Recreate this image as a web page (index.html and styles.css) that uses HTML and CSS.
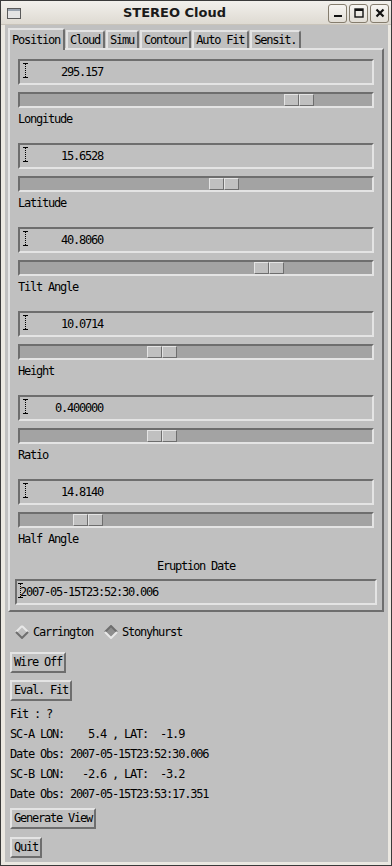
FILE: index.html
```html
<!DOCTYPE html>
<html lang="en">

<head>
  <meta charset="UTF-8">
  <meta name="viewport" content="width=device-width, initial-scale=1.0">
  <title>STEREO Cloud</title>
  <link rel="stylesheet" href="styles.css">
</head>

<body>
  <div class="window">
    <div class="titlebar">
      <svg class="app-icon" width="14" height="11" viewBox="0 0 14 11">
        <rect x="0.5" y="0.5" width="13" height="10" fill="#e4e4e4" stroke="#5a5a5a" />
        <rect x="1" y="1" width="12" height="2" fill="#9aa4b0" />
      </svg>
      <span class="title">STEREO Cloud</span>
      <div class="wm-buttons">
        <span class="wm-btn">
          <svg width="10" height="10" viewBox="0 0 10 10"><rect x="1" y="7" width="8" height="2" fill="#111" /></svg>
        </span>
        <span class="wm-btn">
          <svg width="10" height="10" viewBox="0 0 10 10"><rect x="1" y="1" width="8" height="8" fill="none" stroke="#111" stroke-width="1.4" /><rect x="1" y="1" width="8" height="2" fill="#111" /></svg>
        </span>
        <span class="wm-btn">
          <svg width="10" height="10" viewBox="0 0 10 10"><path d="M1.5 1.5l7 7M8.5 1.5l-7 7" stroke="#111" stroke-width="2.2" /></svg>
        </span>
      </div>
    </div>

    <div class="client">
      <div class="tabs">
        <span class="tab active">Position</span>
        <span class="tab">Cloud</span>
        <span class="tab">Simu</span>
        <span class="tab">Contour</span>
        <span class="tab">Auto Fit</span>
        <span class="tab">Sensit.</span>
      </div>

      <div class="panel">
        <div class="param">
          <div class="field"><svg class="caret" width="5" height="15"><path d="M0 0.5h5M0 14.5h5" stroke="#000" /><path d="M2.5 1v13" stroke="#000" stroke-dasharray="1 1" /></svg><span class="value">      295.157</span></div>
          <div class="slider"><span class="thumb" style="margin-left: 264px"><i></i><i></i></span></div>
          <div class="param-label">Longitude</div>
        </div>
        <div class="param">
          <div class="field"><svg class="caret" width="5" height="15"><path d="M0 0.5h5M0 14.5h5" stroke="#000" /><path d="M2.5 1v13" stroke="#000" stroke-dasharray="1 1" /></svg><span class="value">      15.6528</span></div>
          <div class="slider"><span class="thumb" style="margin-left: 189px"><i></i><i></i></span></div>
          <div class="param-label">Latitude</div>
        </div>
        <div class="param">
          <div class="field"><svg class="caret" width="5" height="15"><path d="M0 0.5h5M0 14.5h5" stroke="#000" /><path d="M2.5 1v13" stroke="#000" stroke-dasharray="1 1" /></svg><span class="value">      40.8060</span></div>
          <div class="slider"><span class="thumb" style="margin-left: 234px"><i></i><i></i></span></div>
          <div class="param-label">Tilt Angle</div>
        </div>
        <div class="param">
          <div class="field"><svg class="caret" width="5" height="15"><path d="M0 0.5h5M0 14.5h5" stroke="#000" /><path d="M2.5 1v13" stroke="#000" stroke-dasharray="1 1" /></svg><span class="value">      10.0714</span></div>
          <div class="slider"><span class="thumb" style="margin-left: 127px"><i></i><i></i></span></div>
          <div class="param-label">Height</div>
        </div>
        <div class="param">
          <div class="field"><svg class="caret" width="5" height="15"><path d="M0 0.5h5M0 14.5h5" stroke="#000" /><path d="M2.5 1v13" stroke="#000" stroke-dasharray="1 1" /></svg><span class="value">     0.400000</span></div>
          <div class="slider"><span class="thumb" style="margin-left: 127px"><i></i><i></i></span></div>
          <div class="param-label">Ratio</div>
        </div>
        <div class="param">
          <div class="field"><svg class="caret" width="5" height="15"><path d="M0 0.5h5M0 14.5h5" stroke="#000" /><path d="M2.5 1v13" stroke="#000" stroke-dasharray="1 1" /></svg><span class="value">      14.8140</span></div>
          <div class="slider"><span class="thumb" style="margin-left: 53px"><i></i><i></i></span></div>
          <div class="param-label">Half Angle</div>
        </div>

        <div class="date-title">Eruption Date</div>
        <div class="field date-field"><svg class="caret" width="5" height="15"><path d="M0 0.5h5M0 14.5h5" stroke="#000" /><path d="M2.5 1v13" stroke="#000" stroke-dasharray="1 1" /></svg><span class="value">2007-05-15T23:52:30.006</span></div>
      </div>

      <div class="radios">
        <label class="radio">
          <svg width="14" height="14" viewBox="0 0 14 14">
            <path d="M7 1L1 7" stroke="#e8e8e8" stroke-width="2" />
            <path d="M7 1L13 7" stroke="#e8e8e8" stroke-width="2" />
            <path d="M1 7L7 13L13 7" fill="none" stroke="#6e6e6e" stroke-width="2" />
          </svg>
          Carrington
        </label>
        <label class="radio">
          <svg width="14" height="14" viewBox="0 0 14 14">
            <path d="M7 1L13 7L7 13L1 7Z" fill="#8e8e8e" />
            <path d="M1 7L7 1L13 7" fill="none" stroke="#6e6e6e" stroke-width="2" />
            <path d="M1 7L7 13L13 7" fill="none" stroke="#e8e8e8" stroke-width="2" />
          </svg>
          Stonyhurst
        </label>
      </div>

      <button class="btn wire-btn">Wire Off</button>
      <button class="btn eval-btn">Eval. Fit</button>

      <div class="info">
        <div>Fit : ?</div>
        <div>SC-A LON:    5.4 , LAT:  -1.9</div>
        <div>Date Obs: 2007-05-15T23:52:30.006</div>
        <div>SC-B LON:   -2.6 , LAT:  -3.2</div>
        <div>Date Obs: 2007-05-15T23:53:17.351</div>
      </div>

      <button class="btn gen-btn">Generate View</button>
      <button class="btn quit-btn">Quit</button>
    </div>
  </div>
</body>

</html>
```

FILE: styles.css
```css
body {
  margin: 0;
  background-color: #3c3c3c;
  font-family: "DejaVu Sans Mono", monospace;
  font-size: 12px;
  letter-spacing: -1.22px;
  color: #000;
}

.window {
  width: 392px;
  height: 866px;
  box-sizing: border-box;
  border: 1px solid #3a3a3a;
  background-color: #ebe8e1;
  display: flex;
  flex-direction: column;
}

/* title bar */
.titlebar {
  height: 23px;
  display: flex;
  align-items: center;
  background: linear-gradient(#f2f0ec, #dedad2);
  border-bottom: 1px solid #c9c4ba;
}

.app-icon {
  margin-left: 6px;
  margin-top: 1px;
}

.title {
  flex: 1;
  text-align: center;
  font-family: "DejaVu Sans", sans-serif;
  font-weight: bold;
  font-size: 13px;
  letter-spacing: 0;
  color: #1a1a1a;
}

.wm-buttons {
  display: flex;
  gap: 2px;
  margin-right: 2px;
  margin-top: 1px;
}

.wm-btn {
  width: 17px;
  height: 17px;
  border: 1px solid #857d6e;
  border-radius: 3px;
  background: linear-gradient(#f7f5f2, #e2ded6);
  display: flex;
  align-items: center;
  justify-content: center;
}

/* client area */
.client {
  flex: 1;
  margin: 0 3px 3px 4px;
  background-color: #c0c0c0;
  display: flex;
  flex-direction: column;
  align-items: flex-start;
}

.tabs {
  display: flex;
  align-items: flex-end;
  padding: 3px 0 0 3px;
  position: relative;
  z-index: 1;
}

.tab {
  height: 14px;
  line-height: 14px;
  padding: 1px 3px 1px 2px;
  margin-right: 1px;
  border-top: 2px solid #e4e4e4;
  border-left: 2px solid #e4e4e4;
  border-right: 2px solid #6e6e6e;
  border-top-right-radius: 3px;
  background-color: #c0c0c0;
  white-space: pre;
}

.tab.active {
  height: 14px;
  padding: 3px 3px 3px 2px;
  margin-bottom: -2px;
}

.panel {
  align-self: stretch;
  margin: 0 4px 0 3px;
  padding: 9px 8px 5px;
  border: 2px solid;
  border-color: #e4e4e4 #6e6e6e #6e6e6e #e4e4e4;
  display: flex;
  flex-direction: column;
}

.param + .param {
  margin-top: 13px;
}

.field {
  height: 22px;
  position: relative;
  padding-left: 5px;
  border: 2px solid;
  border-color: #6e6e6e #e4e4e4 #e4e4e4 #6e6e6e;
  line-height: 22px;
  white-space: pre;
}

.caret {
  position: absolute;
  left: 3px;
  top: 2px;
}

.slider {
  margin-top: 7px;
  height: 12px;
  display: flex;
  align-items: center;
  border: 2px solid;
  border-color: #6e6e6e #e4e4e4 #e4e4e4 #6e6e6e;
  background-color: #a3a3a3;
}

.thumb {
  display: flex;
  height: 12px;
}

.thumb i {
  width: 13px;
  height: 10px;
  border: 1px solid;
  border-color: #e4e4e4 #6e6e6e #6e6e6e #e4e4e4;
  background-color: #c0c0c0;
}

.param-label {
  height: 22px;
  line-height: 22px;
}

.date-title {
  margin-top: 7px;
  height: 18px;
  line-height: 18px;
  text-align: center;
}

.date-field {
  margin: 4px -3px 0;
  padding-left: 3px;
}

.date-field .caret {
  left: 1px;
}

/* lower controls */
.radios {
  display: flex;
  align-items: center;
  height: 18px;
  margin: 11px 0 0 10px;
}

.radio {
  display: flex;
  align-items: center;
  gap: 4px;
  margin-right: 11px;
}

.btn {
  margin-left: 5px;
  height: 21px;
  padding: 0 2px;
  border: 2px solid;
  border-color: #e4e4e4 #6e6e6e #6e6e6e #e4e4e4;
  background-color: #c0c0c0;
  font: inherit;
  letter-spacing: inherit;
  color: #000;
  line-height: 17px;
}

.wire-btn {
  margin-top: 11px;
}

.eval-btn {
  margin-top: 7px;
}

.info {
  margin: 3px 0 0 5px;
  line-height: 20px;
}

.info div {
  white-space: pre;
}

.gen-btn {
  margin-top: 4px;
}

.quit-btn {
  margin-top: 8px;
}
```
